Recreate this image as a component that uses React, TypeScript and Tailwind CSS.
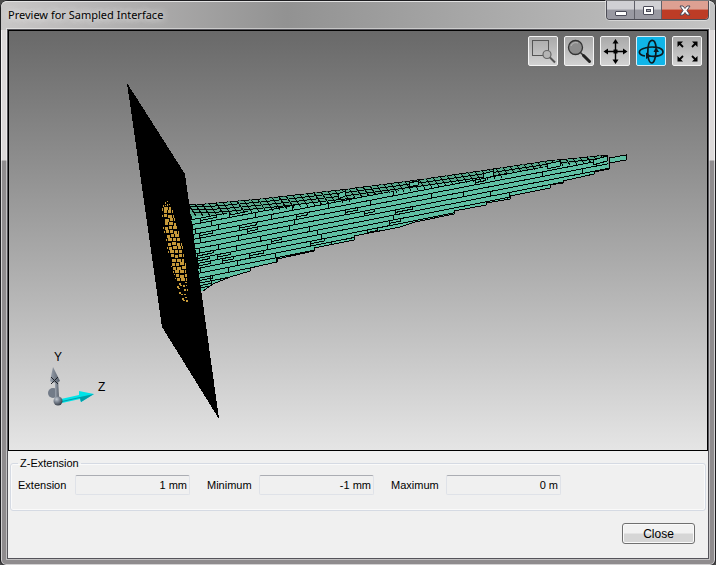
import type { ReactNode } from "react";

type Point = [number, number];

const TOP_EDGE: Point[] = [
    [186, 204],
    [205, 204],
    [260, 199],
    [340, 190],
    [410, 181],
    [480, 171],
    [547, 161],
    [607, 155],
];

const BOTTOM_EDGE: Point[] = [
    [609, 169],
    [594, 172],
    [594, 174],
    [563, 181],
    [563, 183],
    [550, 185],
    [550, 188],
    [510, 196],
    [510, 199],
    [486, 203],
    [486, 205],
    [454, 211],
    [454, 214],
    [415, 222],
    [400, 227],
    [354, 236],
    [354, 240],
    [314, 248],
    [314, 251],
    [277, 259],
    [277, 262],
    [250, 268],
    [250, 271],
    [230, 277],
    [213, 284],
    [203, 291],
];

const toPoints = (pts: Point[]) => pts.map((p) => p.join(",")).join(" ");

// linear interpolation along a list of points sorted by their first value
function lerp(pts: Point[], at: number) {
    for (let i = 1; i < pts.length; i++) {
        if (at <= pts[i][0]) {
            const [x0, y0] = pts[i - 1];
            const [x1, y1] = pts[i];
            return y0 + ((at - x0) / (x1 - x0)) * (y1 - y0);
        }
    }
    return pts[pts.length - 1][1];
}

// small repeatable pseudo random number, 0..1
function noise(n: number) {
    const v = Math.sin(n * 127.1 + 11.7) * 43758.5453;
    return v - Math.floor(v);
}

function slatLines() {
    const parts: string[] = [];
    for (let k = 0; k < 20; k++) {
        const y0 = 200 + k * 5;
        const slope = -0.187 - k * 0.0008;
        const yAt = (x: number) => y0 + (x - 190) * slope;
        parts.push(`M186 ${yAt(186).toFixed(1)}L612 ${yAt(612).toFixed(1)}`);
        let x = 190 + noise(k) * 10;
        let step = 0;
        while (x < 605) {
            // end face of a slat, sometimes with the thin face of its neighbour
            parts.push(`M${x.toFixed(0)} ${yAt(x).toFixed(1)}v5`);
            if (noise(k * 7 + step) > 0.55) {
                const end = x + 8 + noise(k * 3 + step) * 12;
                parts.push(
                    `M${x.toFixed(0)} ${(yAt(x) + 2.5).toFixed(1)}L${end.toFixed(0)} ${(yAt(end) + 2.5).toFixed(1)}v-2.5`
                );
            }
            x += 11 + (x - 186) * 0.36 + noise(k * 13 + step) * 34;
            step++;
        }
    }
    return parts.join(" ");
}

const bandHeight = (x: number) => 12 - (x - 186) * 0.019;

function bandLines() {
    const parts: string[] = [];
    for (let x = 188; x < 604; x += 7) {
        const rows = Math.floor(bandHeight(x) / 3);
        for (let i = 0; i <= rows; i++) {
            const px = x + i * 2;
            const y = lerp(TOP_EDGE, x) + i * 3;
            parts.push(`M${px} ${y.toFixed(1)}l7 -1M${px} ${y.toFixed(1)}l2 3`);
        }
    }
    return parts.join(" ");
}

const BAND: Point[] = [
    ...TOP_EDGE,
    ...[...TOP_EDGE].reverse().map(([x, y]): Point => [x, y + bandHeight(x)]),
];

const SPOT_LEFT: Point[] = [[200, 165], [206, 162], [224, 163], [245, 167], [265, 171], [290, 179], [303, 184]];
const SPOT_RIGHT: Point[] = [[200, 167], [210, 173], [225, 177], [240, 181], [255, 184], [275, 187], [303, 188]];

function spotCells() {
    const cells: { x: number; y: number; w: number; h: number }[] = [];
    let row = 0;
    for (let y = 201; y < 303; y += y < 208 || y > 280 ? 3 : 4) {
        const right = lerp(SPOT_RIGHT, y);
        let x = Math.round(lerp(SPOT_LEFT, y));
        let col = 0;
        while (x < right) {
            const big = y > 206 && y < 279 && col > 0;
            const w = big ? 3 + (noise(row * 5 + col) > 0.5 ? 1 : 0) : y < 279 ? 1 : 2;
            if (big || noise(row * 9 + col) > 0.3) {
                cells.push({
                    x,
                    y: y + Math.floor(noise(row + col * 17) * 2),
                    w: Math.min(w, Math.max(1, Math.round(right - x))),
                    h: big ? 3 : noise(row + col * 5) > 0.5 ? 2 : 1,
                });
            }
            x += w + 1;
            col++;
        }
        row++;
    }
    return cells;
}

function Scene() {
    return (
        <svg
            viewBox="9 31 698 419"
            className="block h-full w-full"
            role="img"
            aria-label="Sampled interface preview"
        >
            <defs>
                <clipPath id="body">
                    <polygon points={toPoints([...TOP_EDGE, ...BOTTOM_EDGE, [196, 291]])} />
                </clipPath>
                <linearGradient id="shaft" x1="0" x2="1">
                    <stop offset="0" stopColor="#9ba3ae" />
                    <stop offset="1" stopColor="#555d69" />
                </linearGradient>
                <radialGradient id="ball" cx="0.35" cy="0.3" r="0.7">
                    <stop offset="0" stopColor="#c3cad3" />
                    <stop offset="0.5" stopColor="#79828f" />
                    <stop offset="1" stopColor="#3d444e" />
                </radialGradient>
            </defs>

            <g clipPath="url(#body)" shapeRendering="crispEdges">
                <rect x="180" y="150" width="440" height="150" fill="#5fbfa3" />
                <path d={slatLines()} fill="none" stroke="#000" />
                <polygon points={toPoints(BAND)} fill="#57a88c" />
                <path d={bandLines()} fill="none" stroke="#000" />
            </g>
            <g shapeRendering="crispEdges" fill="#5fbfa3" stroke="#000">
                <polyline points={toPoints(TOP_EDGE)} fill="none" strokeDasharray="9 2" />
                <polyline points={toPoints([[609, 158], ...BOTTOM_EDGE])} fill="none" />
                <path d="M609 158l17-3v5l-17 3z" />
                <path d="M593 160l14-4v5l-14 4zM547 164l13-3v5l-13 3z" />
                <path d="M483 174l10-3v5l-10 3zM409 183l9-2v4l-9 2zM338 194l7-3v5l-7 3z" />
            </g>

            <polygon
                points="127,83 185,174 219,419 162,327"
                fill="#000"
                shapeRendering="crispEdges"
            />
            <g fill="#c79a3a" shapeRendering="crispEdges">
                {spotCells().map((c, i) => (
                    <rect key={i} x={c.x} y={c.y} width={c.w} height={c.h} />
                ))}
            </g>

            {/* axis triad */}
            <ellipse cx="53" cy="393" rx="5" ry="5" fill="#727b88" />
            <path d="M55 378h3l1 20h-4z" fill="url(#shaft)" />
            <path d="M53 367l7 14c-3 2-8 2-10 0z" fill="url(#shaft)" />
            <path d="M51 377l7 7M58 377l-7 7" stroke="#20242a" />
            <path d="M61 399l18-4v-4l15 3-13 8-1-3-18 4z" fill="#00e4e8" />
            <path d="M62 402l18-4 1 4 13-8-14 3-18 4z" fill="#009da8" />
            <circle cx="58" cy="401" r="4.5" fill="url(#ball)" />
            <text x="54" y="361" className="text-[12px]" fill="#000">
                Y
            </text>
            <text x="98" y="391" className="text-[12px]" fill="#000">
                Z
            </text>
        </svg>
    );
}

function ToolButton({ label, active, children }: { label: string; active?: boolean; children: ReactNode }) {
    return (
        <button
            type="button"
            aria-label={label}
            aria-pressed={!!active}
            className={`size-[30px] rounded-xs border ${
                active
                    ? "border-[#d8eef6] bg-[#10b5e8]"
                    : "border-[#f4f4f4] bg-linear-to-b from-[#a9a9a9] to-[#d2d2d2]"
            }`}
        >
            <svg viewBox="0 0 28 28" className="size-7">
                {children}
            </svg>
        </button>
    );
}

function Toolbar() {
    return (
        <div className="absolute top-[5px] right-[5px] flex gap-1.5">
            <ToolButton label="Zoom to area">
                <rect x="3.5" y="3.5" width="16" height="15" fill="none" stroke="#555" />
                <circle cx="18" cy="17.5" r="4" fill="#b5b5b5" stroke="#666" strokeWidth="1.2" />
                <path d="M21 20.5l5 5" stroke="#555" strokeWidth="2" />
            </ToolButton>
            <ToolButton label="Zoom">
                <circle cx="10.5" cy="10.5" r="7" fill="#8c8c8c" stroke="#333" strokeWidth="1.3" />
                <path d="M6 9c1-3 4-4 7-3" stroke="#bbb" fill="none" />
                <path d="M15.5 15.5l3 3" stroke="#333" strokeWidth="1.5" />
                <path d="M18.5 18.5l6 6" stroke="#222" strokeWidth="3" strokeLinecap="round" />
            </ToolButton>
            <ToolButton label="Pan">
                <path d="M14.5 4v21M4 14.5h21" stroke="#000" strokeWidth="1.4" />
                <path d="M14.5 2l3 4.5h-6zM14.5 27l3-4.5h-6zM2.500 14.500l4.500-3v6zM26.500 14.500l-4.500-3v6z" />
                <rect x="12.5" y="12.500" width="4" height="4" />
            </ToolButton>
            <ToolButton label="Rotate" active>
                <g fill="none" stroke="#0c1a20" strokeWidth="1.7">
                    <path d="M8 19c-7-1-8-6 0-8 7-2 18-1 18 4 0 4-8 5-14 4" />
                    <path d="M19 10c-1-9-7-9-8 1-1 9 1 15 4 15 2 0 4-6 4-12" />
                </g>
                <path d="M9 15.500l5 3.500-5 3zM16.500 15l2.500-5 3 5z" fill="#0c1a20" />
            </ToolButton>
            <ToolButton label="Fit to view">
                <g stroke="#000" strokeWidth="1.8">
                    <path d="M6 6l4 4M23 6l-4 4M6 23l4-4M23 23l-4-4" />
                </g>
                <path d="M4.500 4.500h5.500l-5.500 5.500zM24.500 4.500h-5.500l5.500 5.500zM4.500 24.500h5.500l-5.500-5.500zM24.500 24.500h-5.500l5.500-5.500z" />
            </ToolButton>
        </div>
    );
}

function TitleBar() {
    return (
        <header className="flex h-[29px] items-start justify-between rounded-t-md bg-linear-to-r from-[#c9c7c7] via-[#929292] via-40% to-[#c4c4c4] pr-1.5 pl-[7px] shadow-[inset_0_1px_0_#e2e2e2]">
            <h1 className="mt-1 font-['Noto_Sans',sans-serif] text-[11px] leading-5 text-black [text-shadow:0_0_6px_#e8e8e8,0_0_8px_#e8e8e8]">
                Preview for Sampled Interface
            </h1>
            <div className="flex h-[19px] overflow-hidden rounded-b border border-t-0 border-[#4c4c55] shadow-[0_0_0_1px_rgba(255,255,255,0.4)]">
                <button
                    type="button"
                    aria-label="Minimize"
                    className="flex w-7 justify-center border-r border-[#5f5f68] bg-linear-to-b from-[#d0d0d4] from-45% to-[#9999a2] to-50% pt-2.5"
                >
                    <span className="h-[5px] w-3 rounded-[1px] border border-[#4a4a58] bg-white" />
                </button>
                <button
                    type="button"
                    aria-label="Maximize"
                    className="flex w-[27px] justify-center border-r border-[#5f5f68] bg-linear-to-b from-[#d0d0d4] from-45% to-[#9999a2] to-50% pt-[5px]"
                >
                    <span className="h-[9px] w-[11px] rounded-[1px] border border-[#4a4a58] bg-white p-0.5">
                        <span className="block h-full border border-[#4a4a58] bg-[#aaaab2]" />
                    </span>
                </button>
                <button
                    type="button"
                    aria-label="Close window"
                    className="flex w-[46px] justify-center bg-linear-to-b from-[#dda092] from-45% to-[#bd3c26] to-50% pt-1"
                >
                    <svg viewBox="0 0 12 11" className="h-[11px] w-3">
                        <path
                            d="M1 1h3l2 2.500 2-2.500h3L8 5.500 11 10H8L6 7.500 4 10H1l3-4.500z"
                            fill="#fff"
                            stroke="#4a4a58"
                        />
                    </svg>
                </button>
            </div>
        </header>
    );
}

const fields = [
    { id: "extension", label: "Extension", value: "1 mm", labelWidth: "w-[57px]" },
    { id: "minimum", label: "Minimum", value: "-1 mm", labelWidth: "w-[52px]" },
    { id: "maximum", label: "Maximum", value: "0 m", labelWidth: "w-[55px]" },
];

export default function App() {
    return (
        <div className="min-h-screen bg-[#4a4a4a] font-['Liberation_Sans',Arial,sans-serif] text-[11px] text-black">
            <div className="flex min-h-screen flex-col rounded-t-lg rounded-b-md border border-[#1d1d20] bg-[linear-gradient(to_bottom,#dcd9d9_159px,#8f8c8e_160px)] shadow-[inset_0_0_0_1px_rgba(255,255,255,0.6)]">
                <TitleBar />
                <main className="mx-[7px] mb-[7px] flex flex-1 flex-col bg-[#f0f0f0] shadow-[0_0_0_1px_#55545a,0_0_0_2px_rgba(255,255,255,0.45)]">
                    <div className="relative flex-1 border border-black bg-linear-to-b from-[#696969] to-[#e5e5e5]">
                        <Scene />
                        <Toolbar />
                    </div>
                    <div className="px-0.5 pt-1.5 pb-3.5">
                        <fieldset className="h-[54px] rounded-[3px] border border-[#d5dae3] px-[7px] shadow-[inset_0_0_0_1px_#fafafa]">
                            <legend className="h-3 px-0.5 leading-3">Z-Extension</legend>
                            <div className="flex flex-wrap gap-[17px] pt-1.5">
                                {fields.map((f) => (
                                    <div key={f.id} className="flex items-center">
                                        <label htmlFor={f.id} className={f.labelWidth}>
                                            {f.label}
                                        </label>
                                        <input
                                            id={f.id}
                                            readOnly
                                            value={f.value}
                                            className="h-5 w-[115px] rounded-xs border border-[#dfe2e8] border-t-[#abadb3] bg-[#f0f0f0] px-0.5 text-right"
                                        />
                                    </div>
                                ))}
                            </div>
                        </fieldset>
                        <div className="mt-3 flex justify-end pr-[11px]">
                            <button
                                type="button"
                                className="h-[21px] w-[73px] rounded-[3px] border border-[#707070] bg-linear-to-b from-[#f2f2f2] from-45% to-[#d6d6d6] to-55% text-[12px] leading-[18px] shadow-[inset_0_0_0_1px_#fafafa]"
                            >
                                Close
                            </button>
                        </div>
                    </div>
                </main>
            </div>
        </div>
    );
}
